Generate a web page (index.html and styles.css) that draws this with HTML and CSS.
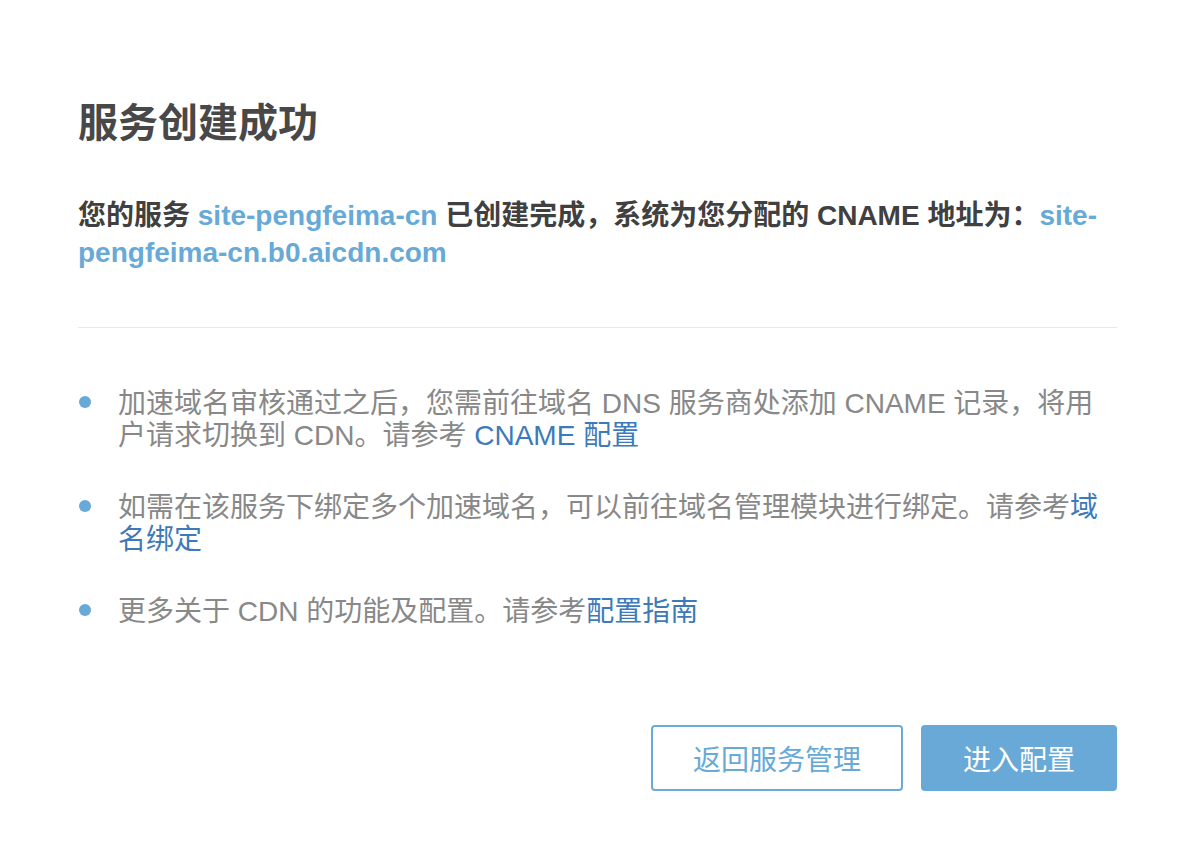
FILE: index.html
```html
<!DOCTYPE html>
<html lang="zh-CN">
<head>
<meta charset="utf-8">
<title>服务创建成功</title>
<link rel="stylesheet" href="styles.css">
</head>
<body>
<div class="dialog">
  <h1 class="title">服务创建成功</h1>
  <p class="summary">您的服务 <a class="hl">site-pengfeima-cn</a> 已创建完成，系统为您分配的 CNAME 地址为：<a class="hl">site-pengfeima-cn.b0.aicdn.com</a></p>
  <hr class="divider">
  <ul class="tips">
    <li class="tip">加速域名审核通过之后，您需前往域名 DNS 服务商处添加 CNAME 记录，将用户请求切换到 CDN。请参考 <a class="link">CNAME 配置</a></li>
    <li class="tip">如需在该服务下绑定多个加速域名，可以前往域名管理模块进行绑定。请参考<a class="link">域名绑定</a></li>
    <li class="tip">更多关于 CDN 的功能及配置。请参考<a class="link">配置指南</a></li>
  </ul>
  <div class="actions">
    <button class="btn btn-outline">返回服务管理</button>
    <button class="btn btn-primary">进入配置</button>
  </div>
</div>
</body>
</html>
```
FILE: styles.css
```css
html, body {
  margin: 0;
  padding: 0;
  background: #ffffff;
}
body {
  font-family: "Liberation Sans", "Noto Sans CJK SC", sans-serif;
  color: #444;
}
.dialog {
  padding: 99px 79px 0 78px;
}
.title {
  margin: 0 0 50px;
  font-size: 40px;
  line-height: 48px;
  font-weight: 700;
  color: #484848;
}
.summary {
  margin: 0;
  font-size: 28px;
  line-height: 37px;
  font-weight: 700;
  color: #404040;
}
.hl {
  color: #67a9d7;
}
.divider {
  margin: 56px 0 0;
  border: 0;
  height: 1px;
  background: #e8e8e8;
}
.tips {
  list-style: none;
  margin: 60px 0 0;
  padding: 0;
}
.tip {
  position: relative;
  padding-left: 40px;
  font-size: 28px;
  line-height: 32px;
  color: #888;
  margin-bottom: 40px;
}
.tip:last-child {
  margin-bottom: 0;
}
.tip::before {
  content: "";
  position: absolute;
  left: 1px;
  top: 8px;
  width: 12px;
  height: 12px;
  border-radius: 50%;
  background: #67a9d7;
}
.link {
  color: #3d7ab9;
}
.actions {
  display: flex;
  justify-content: flex-end;
  gap: 18px;
  margin-top: 97px;
}
.btn {
  height: 66px;
  border-radius: 4px;
  font-family: "Liberation Sans", "Noto Sans CJK SC", sans-serif;
  font-size: 28px;
  padding: 0;
  cursor: pointer;
}
.btn-outline {
  width: 252px;
  background: #fff;
  border: 2px solid #6aaad8;
  color: #67a9d7;
}
.btn-primary {
  width: 196px;
  background: #68a9d7;
  border: 0;
  color: #fff;
}
```
